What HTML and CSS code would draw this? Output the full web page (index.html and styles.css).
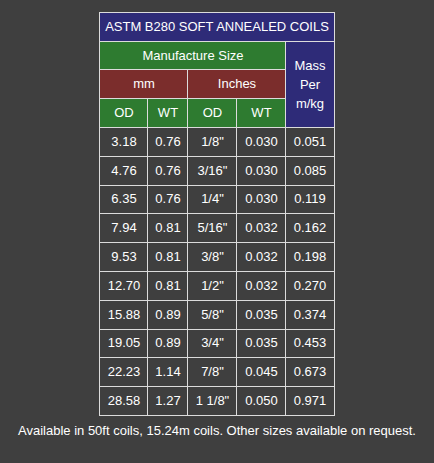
FILE: index.html
```html
<!DOCTYPE html>
<html>
<head>
<meta charset="utf-8">
<link rel="stylesheet" href="styles.css">
</head>
<body>
<div class="page">
  <table class="coils">
    <colgroup>
      <col class="c1"><col class="c2"><col class="c3"><col class="c4"><col class="c5">
    </colgroup>
    <thead>
      <tr class="r-title"><th colspan="5" class="navy title">ASTM B280 SOFT ANNEALED COILS</th></tr>
      <tr class="r-manu"><th colspan="4" class="green">Manufacture Size</th><th rowspan="3" class="navy mass">Mass<br>Per<br>m/kg</th></tr>
      <tr class="r-unit"><th colspan="2" class="red">mm</th><th colspan="2" class="red">Inches</th></tr>
      <tr class="r-dim"><th class="green">OD</th><th class="green">WT</th><th class="green">OD</th><th class="green">WT</th></tr>
    </thead>
    <tbody>
      <tr><td>3.18</td><td>0.76</td><td>1/8"</td><td>0.030</td><td>0.051</td></tr>
      <tr><td>4.76</td><td>0.76</td><td>3/16"</td><td>0.030</td><td>0.085</td></tr>
      <tr><td>6.35</td><td>0.76</td><td>1/4"</td><td>0.030</td><td>0.119</td></tr>
      <tr><td>7.94</td><td>0.81</td><td>5/16"</td><td>0.032</td><td>0.162</td></tr>
      <tr><td>9.53</td><td>0.81</td><td>3/8"</td><td>0.032</td><td>0.198</td></tr>
      <tr><td>12.70</td><td>0.81</td><td>1/2"</td><td>0.032</td><td>0.270</td></tr>
      <tr><td>15.88</td><td>0.89</td><td>5/8"</td><td>0.035</td><td>0.374</td></tr>
      <tr><td>19.05</td><td>0.89</td><td>3/4"</td><td>0.035</td><td>0.453</td></tr>
      <tr><td>22.23</td><td>1.14</td><td>7/8"</td><td>0.045</td><td>0.673</td></tr>
      <tr><td>28.58</td><td>1.27</td><td>1 1/8"</td><td>0.050</td><td>0.971</td></tr>
    </tbody>
  </table>
  <p class="note">Available in 50ft coils, 15.24m coils. Other sizes available on request.</p>
</div>
</body>
</html>
```
FILE: styles.css
```css
html, body {
  margin: 0;
  padding: 0;
  background: #3f3f3f;
}
.page {
  padding-top: 12px;
  display: flex;
  flex-direction: column;
  align-items: center;
  font-family: "Liberation Sans", Arial, sans-serif;
  color: #ffffff;
}
.coils {
  border-collapse: collapse;
  width: 235px;
  table-layout: fixed;
  border: 1px solid #dcdcdc;
}
.c1 { width: 48px; }
.c2 { width: 40px; }
.c3 { width: 49px; }
.c4 { width: 49px; }
.c5 { width: 48px; }
.coils th, .coils td {
  border: 1px solid #dcdcdc;
  padding: 0;
  text-align: center;
  font-size: 13px;
  font-weight: normal;
  line-height: 16px;
  white-space: nowrap;
}
.r-title { height: 29px; }
.r-manu { height: 28px; }
.r-unit { height: 29px; }
.r-dim { height: 29px; }
.coils tbody tr { height: 28.8px; }
.navy { background: #2e2b78; }
.green { background: #2e7b30; }
.red { background: #7b2d2c; }
.coils th.mass { line-height: 19px; }
.note {
  margin: 7px 0 0;
  font-size: 13px;
  line-height: 16px;
  text-align: center;
}
```
